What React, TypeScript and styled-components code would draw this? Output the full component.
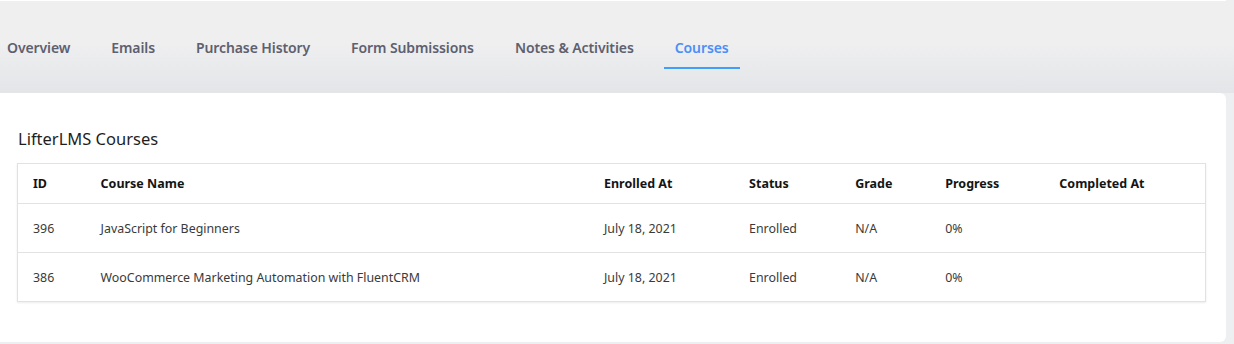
import React from 'react';
import styled, { createGlobalStyle } from 'styled-components';

const GlobalStyle = createGlobalStyle`
  html, body {
    margin: 0;
    padding: 0;
    background: #e6e8eb;
  }
  body {
    font-family: "Noto Sans", "Open Sans", Arial, sans-serif;
    -webkit-font-smoothing: antialiased;
  }
`;

const Page = styled.div`
  width: 1234px;
  height: 344px;
  overflow: hidden;
  background: #eeeff0;
`;

const TopLine = styled.div`
  width: 1226px;
  height: 1px;
  background: #ffffff;
`;

const Header = styled.div`
  height: 92px;
  background: linear-gradient(180deg, #efefef 0%, #efeff0 45%, #e3e5e8 100%);
  display: flex;
  align-items: center;
`;

const TabList = styled.nav`
  display: flex;
  gap: 41px;
  padding-left: 7px;
  margin-top: 2px;
`;

const Tab = styled.div<{ $active?: boolean }>`
  position: relative;
  font-size: 14px;
  font-weight: 600;
  letter-spacing: -0.1px;
  color: ${(p) => (p.$active ? '#4a8ff7' : '#5d606f')};
  line-height: 20px;
  padding: 9px 0;

  &::after {
    content: '';
    display: ${(p) => (p.$active ? 'block' : 'none')};
    position: absolute;
    left: -11px;
    right: -11px;
    bottom: -2px;
    height: 2px;
    background: #409eff;
  }
`;

const Card = styled.section`
  width: 1226px;
  height: 249px;
  box-sizing: border-box;
  background: #ffffff;
  border-radius: 0 6px 6px 0;
  padding: 34px 20px 0 17px;
`;

const Title = styled.h3`
  margin: 0 0 12px 1px;
  font-size: 16.5px;
  font-weight: 400;
  color: #1e1e1e;
  line-height: 24px;
`;

const Table = styled.table`
  width: 1189px;
  border-collapse: collapse;
  table-layout: fixed;
  border: 1px solid #e2e2e2;
  box-shadow: 0 1px 2px rgba(0, 0, 0, 0.08);
`;

const Th = styled.th`
  text-align: left;
  font-size: 12.5px;
  font-weight: 700;
  color: #141414;
  height: 39px;
  padding: 0 0 0 15px;
  border-bottom: 1px solid #e2e2e2;
`;

const Td = styled.td`
  font-size: 12.4px;
  font-weight: 400;
  color: #3a3a3a;
  height: 48px;
  padding: 0 0 0 15px;
  border-bottom: 1px solid #e2e2e2;
  white-space: nowrap;
`;

const tabs = ['Overview', 'Emails', 'Purchase History', 'Form Submissions', 'Notes & Activities', 'Courses'];

const columns = [
  { label: 'ID', width: 68 },
  { label: 'Course Name', width: 503 },
  { label: 'Enrolled At', width: 145 },
  { label: 'Status', width: 106 },
  { label: 'Grade', width: 90 },
  { label: 'Progress', width: 114 },
  { label: 'Completed At', width: 161 },
];

const courses = [
  { id: 396, name: 'JavaScript for Beginners', enrolled: 'July 18, 2021', status: 'Enrolled', grade: 'N/A', progress: '0%', completed: '' },
  { id: 386, name: 'WooCommerce Marketing Automation with FluentCRM', enrolled: 'July 18, 2021', status: 'Enrolled', grade: 'N/A', progress: '0%', completed: '' },
];

const App: React.FC = () => {
  return (
    <>
      <GlobalStyle />
      <Page>
        <TopLine />
        <Header>
          <TabList>
            {tabs.map((t) => (
              <Tab key={t} $active={t === 'Courses'}>
                {t}
              </Tab>
            ))}
          </TabList>
        </Header>
        <Card>
          <Title>LifterLMS Courses</Title>
          <Table>
            <colgroup>
              {columns.map((c) => (
                <col key={c.label} style={{ width: c.width }} />
              ))}
            </colgroup>
            <thead>
              <tr>
                {columns.map((c) => (
                  <Th key={c.label}>{c.label}</Th>
                ))}
              </tr>
            </thead>
            <tbody>
              {courses.map((c) => (
                <tr key={c.id}>
                  <Td>{c.id}</Td>
                  <Td>{c.name}</Td>
                  <Td>{c.enrolled}</Td>
                  <Td>{c.status}</Td>
                  <Td>{c.grade}</Td>
                  <Td>{c.progress}</Td>
                  <Td>{c.completed}</Td>
                </tr>
              ))}
            </tbody>
          </Table>
        </Card>
      </Page>
    </>
  );
};

export default App;
